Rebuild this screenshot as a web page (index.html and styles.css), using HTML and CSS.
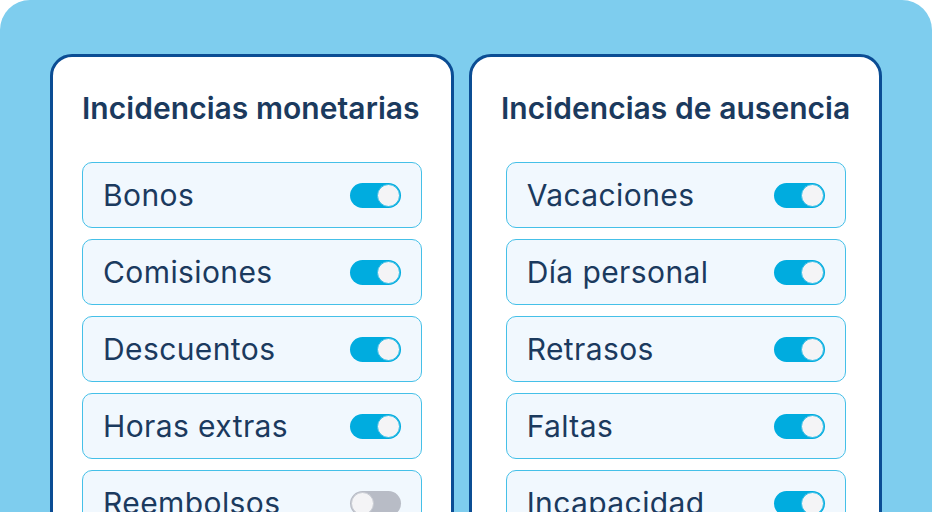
FILE: index.html
```html
<!DOCTYPE html>
<html lang="es">
<head>
  <meta charset="UTF-8">
  <title>Incidencias</title>
  <link rel="stylesheet" href="styles.css">
</head>
<body>
  <div class="board">
    <div class="card">
      <h2>Incidencias monetarias</h2>
      <div class="row"><span>Bonos</span><span class="toggle on"></span></div>
      <div class="row"><span>Comisiones</span><span class="toggle on"></span></div>
      <div class="row"><span>Descuentos</span><span class="toggle on"></span></div>
      <div class="row"><span>Horas extras</span><span class="toggle on"></span></div>
      <div class="row"><span>Reembolsos</span><span class="toggle"></span></div>
    </div>

    <div class="card">
      <h2>Incidencias de ausencia</h2>
      <div class="row"><span>Vacaciones</span><span class="toggle on"></span></div>
      <div class="row"><span>Día personal</span><span class="toggle on"></span></div>
      <div class="row"><span>Retrasos</span><span class="toggle on"></span></div>
      <div class="row"><span>Faltas</span><span class="toggle on"></span></div>
      <div class="row"><span>Incapacidad</span><span class="toggle on"></span></div>
    </div>
  </div>
</body>
</html>
```

FILE: styles.css
```css
html, body {
  margin: 0;
  height: 100%;
  overflow: hidden;
  background: #fff;
}
body {
  font-family: Inter, "Noto Sans", sans-serif;
  color: #1b3a5e;
}
.board {
  display: flex;
  gap: 15px;
  align-items: flex-start;
  height: 100%;
  padding: 54px 50px 0;
  box-sizing: border-box;
  background: #7ecdee;
  border-radius: 30px 30px 0 0;
}
.card {
  display: flex;
  flex-direction: column;
  gap: 11px;
  padding: 0 29px 40px;
  background: #fff;
  border: 3px solid #0b4d94;
  border-radius: 22px;
}
.card h2 {
  align-self: flex-start;
  margin: 33px 0 25px;
  font-size: 30px;
  font-weight: 600;
  line-height: 36px;
  letter-spacing: 0.05px;
  white-space: nowrap;
}
.row {
  display: flex;
  flex-shrink: 0;
  justify-content: space-between;
  align-items: center;
  align-self: center;
  width: 340px;
  height: 66px;
  box-sizing: border-box;
  padding: 0 20px 0 20px;
  background: #f1f8fe;
  border: 1px solid #45c0e8;
  border-radius: 10px;
  font-size: 30px;
  letter-spacing: 0.4px;
}
.toggle {
  position: relative;
  width: 51px;
  height: 25px;
  border-radius: 13px;
  background: #b8bcc6;
}
.toggle::after {
  content: "";
  position: absolute;
  top: 1px;
  left: 1px;
  width: 21px;
  height: 21px;
  border-radius: 50%;
  background: #f4f4f6;
  border: 1px solid #c9ccd3;
}
.toggle.on {
  background: #00acdf;
}
.toggle.on::after {
  left: auto;
  right: 1px;
  border-color: #34bde6;
}
```
